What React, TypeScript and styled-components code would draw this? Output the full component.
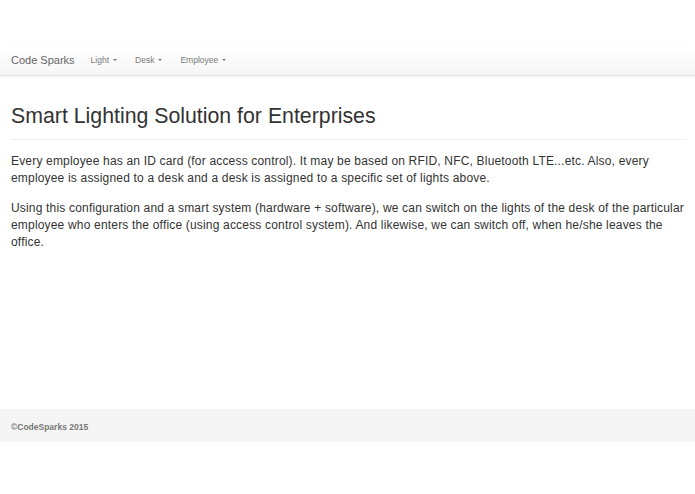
import React from 'react';
import styled, { createGlobalStyle } from 'styled-components';

const GlobalStyle = createGlobalStyle`
  html, body {
    margin: 0;
    padding: 0;
    background: #fff;
  }
  body {
    font-family: "Liberation Sans", Arial, Helvetica, sans-serif;
    color: #333;
  }
`;

const Page = styled.div`
  display: flex;
  flex-direction: column;
  height: 494px;
  padding-top: 45px;
  box-sizing: border-box;
`;

const Navbar = styled.nav`
  display: flex;
  align-items: center;
  height: 30px;
  padding: 0 11px;
  background-image: linear-gradient(to bottom, #ffffff 0%, #f6f6f6 100%);
  border-bottom: 1px solid #e4e4e4;
  box-shadow: 0 1px 3px rgba(0, 0, 0, 0.06);
`;

const Brand = styled.a`
  font-size: 11px;
  color: #666;
  text-decoration: none;
  padding-right: 7px;
`;

const NavList = styled.ul`
  display: flex;
  list-style: none;
  margin: 0;
  padding: 0;
`;

const NavLink = styled.a`
  display: flex;
  align-items: center;
  padding: 0 9px;
  font-size: 8.5px;
  color: #7a7a7a;
  text-decoration: none;
`;

const Caret = styled.span`
  display: inline-block;
  width: 0;
  height: 0;
  margin-left: 4px;
  border-top: 2.5px solid #777;
  border-left: 2.5px solid transparent;
  border-right: 2.5px solid transparent;
`;

const Main = styled.main`
  flex: 1;
  padding: 0 8px 0 11px;
`;

const PageHeader = styled.div`
  margin-top: 26px;
  padding-bottom: 9px;
  border-bottom: 1px solid #eee;
  margin-bottom: 13px;
`;

const Title = styled.h1`
  margin: 0;
  font-size: 21.3px;
  line-height: 28px;
  font-weight: 400;
  color: #333;
`;

const Paragraph = styled.p`
  margin: 0 0 13px;
  font-size: 12px;
  line-height: 17px;
  letter-spacing: 0.18px;
  color: #333;
`;

const Footer = styled.footer`
  display: flex;
  align-items: center;
  height: 33px;
  padding: 3px 11px 0;
  box-sizing: border-box;
  background: #f5f5f5;
  margin-bottom: 52px;
`;

const FooterText = styled.span`
  font-size: 8.5px;
  font-weight: 700;
  color: #777;
`;

const menus = ['Light', 'Desk', 'Employee'];

export default function App() {
  return (
    <>
      <GlobalStyle />
      <Page>
        <Navbar>
          <Brand href="#">Code Sparks</Brand>
          <NavList>
            {menus.map((m) => (
              <li key={m}>
                <NavLink href="#">
                  {m}
                  <Caret />
                </NavLink>
              </li>
            ))}
          </NavList>
        </Navbar>
        <Main>
          <PageHeader>
            <Title>Smart Lighting Solution for Enterprises</Title>
          </PageHeader>
          <Paragraph>
            Every employee has an ID card (for access control). It may be based on RFID, NFC, Bluetooth
            LTE...etc. Also, every employee is assigned to a desk and a desk is assigned to a specific set of
            lights above.
          </Paragraph>
          <Paragraph>
            Using this configuration and a smart system (hardware + software), we can switch on the lights of the
            desk of the particular employee who enters the office (using access control system). And likewise, we
            can switch off, when he/she leaves the office.
          </Paragraph>
        </Main>
        <Footer>
          <FooterText>©CodeSparks 2015</FooterText>
        </Footer>
      </Page>
    </>
  );
}
